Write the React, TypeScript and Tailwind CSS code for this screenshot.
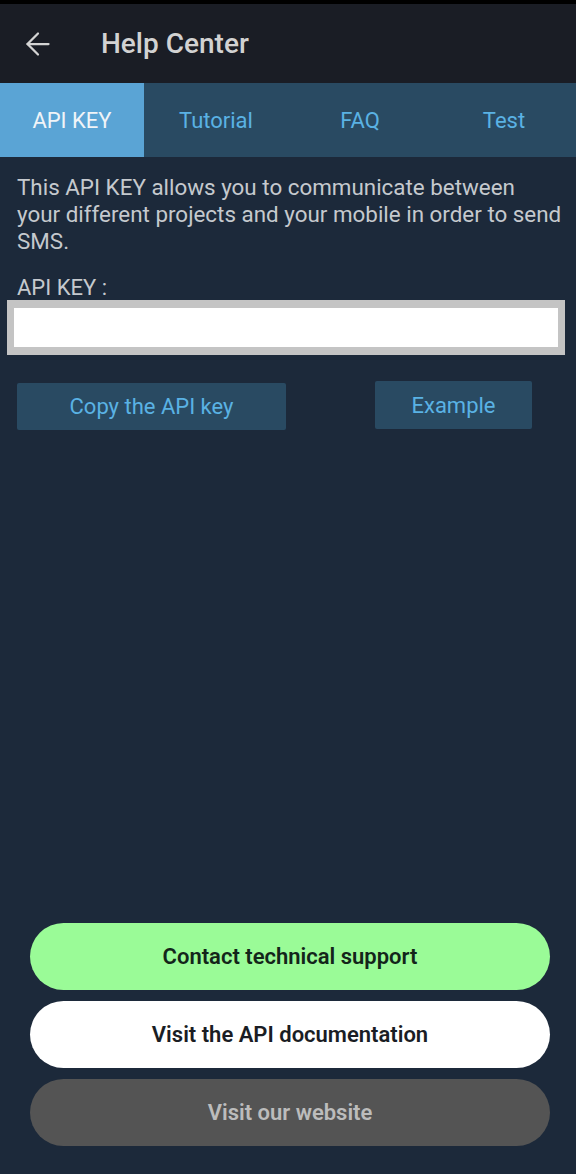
import { ArrowLeft } from 'lucide-react'

const tabs = ['API KEY', 'Tutorial', 'FAQ', 'Test']

export default function App() {
    return (
        <div className="h-[1174px] w-[576px] flex flex-col bg-[#1c293a] font-['Roboto',sans-serif]">
            <div className="h-[4px] bg-black"></div>
            <div className="h-[79px] flex items-center bg-[#1a1d25] px-[20px]">
                <ArrowLeft size={36} strokeWidth={1.5} className="text-[#d4d4d4]" />
                <h1 className="ml-[45px] text-[28px] font-medium text-[#d2d2d2]">Help Center</h1>
            </div>
            <div className="h-[74px] grid grid-cols-4 bg-[#294a62]">
                {tabs.map((t, i) => (
                    <div
                        key={t}
                        className={
                            i === 0
                                ? 'flex items-center justify-center bg-[#5aa4d5] text-[22px] text-[#f0f4f8]'
                                : 'flex items-center justify-center text-[22px] text-[#5ab2e4]'
                        }
                    >
                        {t}
                    </div>
                ))}
            </div>
            <div className="pl-[17px] pr-[4px] pt-[17px]">
                <p className="text-[22.4px] leading-[27px] text-[#c5c9ce]">
                    This API KEY allows you to communicate between
                    <br />
                    your different projects and your mobile in order to send SMS.
                </p>
                <p className="mt-[21px] text-[22px] leading-[24px] text-[#c5c9ce]">API KEY :</p>
            </div>
            <div className="ml-[7px] mr-[11px] bg-[#c4c4c4] px-[7px] py-[8px]">
                <div className="h-[39px] bg-white"></div>
            </div>
            <div className="flex justify-between items-start pl-[17px] pr-[44px] mt-[26px]">
                <button className="mt-[2px] w-[269px] h-[47px] bg-[#294a62] text-[22px] text-[#5ab2e4] rounded-[2px]">
                    Copy the API key
                </button>
                <button className="w-[157px] h-[48px] bg-[#294a62] text-[22px] text-[#5ab2e4] rounded-[2px]">
                    Example
                </button>
            </div>
            <div className="mt-auto flex flex-col gap-[11px] pl-[30px] pr-[26px] pb-[28px]">
                <button className="h-[67px] rounded-full bg-[#9afb97] text-[22px] font-semibold text-[#13251a]">
                    Contact technical support
                </button>
                <button className="h-[67px] rounded-full bg-white text-[22px] font-semibold text-[#1a1d24]">
                    Visit the API documentation
                </button>
                <button className="h-[67px] rounded-full bg-[#545454] text-[22px] font-semibold text-[#bcbcbc]">
                    Visit our website
                </button>
            </div>
        </div>
    )
}
